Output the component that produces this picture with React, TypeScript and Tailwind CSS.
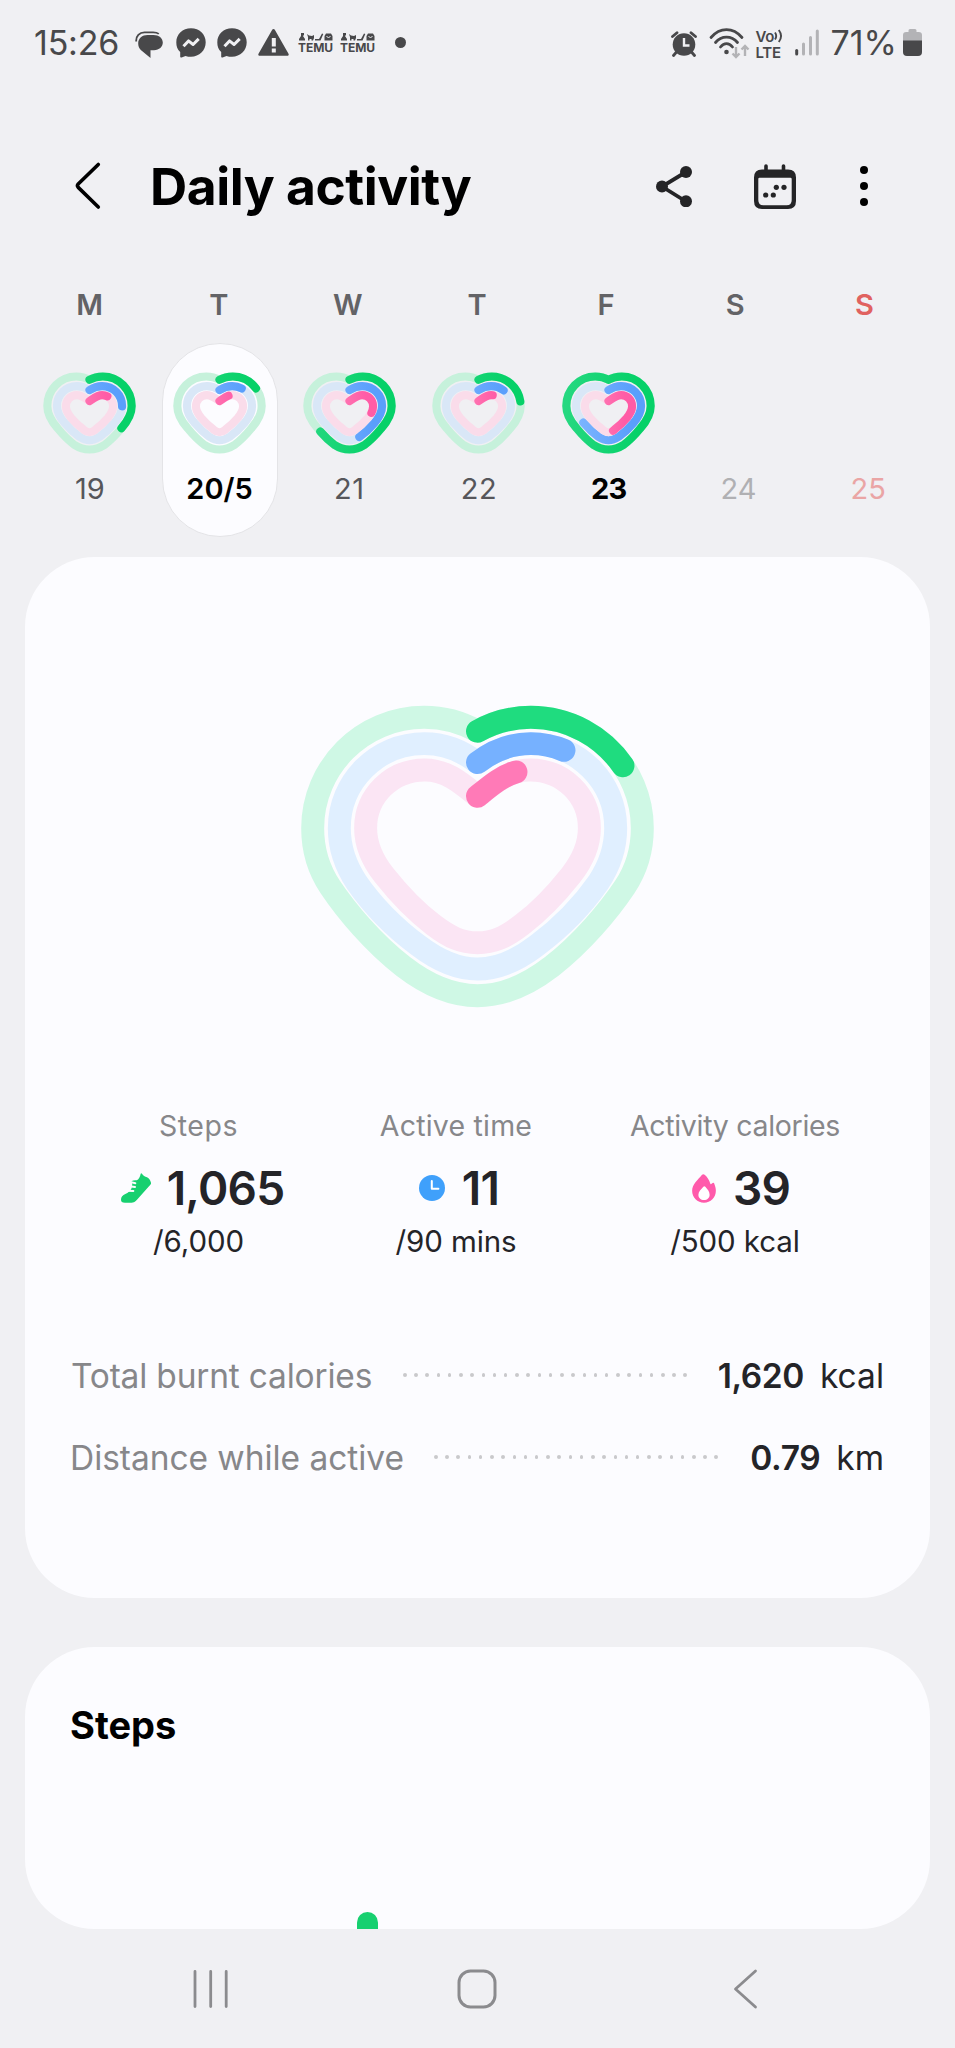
type Progress = { steps: number; time: number; calories: number };

type Day = {
  date: string;
  dateClass: string;
  progress?: Progress;
  selected?: boolean;
};

const weekdays = ["M", "T", "W", "T", "F", "S", "S"];

const days: Day[] = [
  {
    date: "19",
    dateClass: "text-[#56565a]",
    progress: { steps: 34, time: 23.7, calories: 14.3 },
  },
  {
    date: "20/5",
    dateClass: "font-semibold text-black",
    progress: { steps: 16.4, time: 12.3, calories: 7.7 },
    selected: true,
  },
  {
    date: "21",
    dateClass: "text-[#56565a] tracking-[0.500px]",
    progress: { steps: 64.3, time: 44.4, calories: 28 },
  },
  {
    date: "22",
    dateClass: "text-[#56565a] tracking-[0.500px]",
    progress: { steps: 22.1, time: 14.1, calories: 11.5 },
  },
  {
    date: "23",
    dateClass: "font-bold text-black tracking-[-0.800px]",
    progress: { steps: 100, time: 66.5, calories: 46.2 },
  },
  { date: "24", dateClass: "text-[#b0b0b3]" },
  { date: "25", dateClass: "text-[#eaa5a5]" },
];

const smallRings = {
  steps:
    "M0 22C12 15 26 12 40 12C88 12 127 52 127 101C127 128 112 150 96 168C78 190 62 206 44 219C29 229 14 232 0 232C-14 232-29 229-44 219C-62 206-78 190-96 168C-112 150-127 128-127 101C-127 52-88 12-40 12C-26 12-12 15 0 22",
  time: "M0 53C12 45 25 41 38 41C72 41 98 68 98 101C98 122 88 137 75 152C58 172 44 184 30 194C19 201 10 204 0 204C-10 204-19 201-30 194C-44 184-58 172-75 152C-88 137-98 122-98 101C-98 68-72 41-38 41C-25 41-12 45 0 53",
  calories:
    "M0 86C12 78 24 68 38 68C57 68 71 83 71 102C71 116 64 126 56 136C44 150 30 163 18 172C11 178 6 180 0 180C-6 180-11 178-18 172C-30 163-44 150-56 136C-64 126-71 116-71 102C-71 83-57 68-38 68C-24 68-12 78 0 86",
};

function SmallHeart({ progress, day }: { progress: Progress; day: string }) {
  const rings = [
    { d: smallRings.steps, value: progress.steps, track: "#c6f1db", id: "steps", from: "#25d880", to: "#06d168", x: 127 },
    { d: smallRings.time, value: progress.time, track: "#d9e7f7", id: "time", from: "#7db5ff", to: "#5a9ffc", x: 98 },
    { d: smallRings.calories, value: progress.calories, track: "#fadcea", id: "cal", from: "#ff85bb", to: "#ff5ca6", x: 71 },
  ];
  return (
    <svg
      viewBox="-140 -1 280 246"
      className="h-[82px] w-[93px]"
      fill="none"
      strokeWidth="24.5"
    >
      {rings.map((ring) => (
        <g key={ring.id}>
          <linearGradient
            id={`${ring.id}-${day}`}
            gradientUnits="userSpaceOnUse"
            x1={-ring.x}
            y1="0"
            x2={ring.x}
            y2="0"
          >
            <stop stopColor={ring.from} />
            <stop offset="0.85" stopColor={ring.to} />
          </linearGradient>
          <path d={ring.d} stroke={ring.track} />
          <path
            d={ring.d}
            pathLength={100}
            stroke={`url(#${ring.id}-${day})`}
            strokeLinecap="round"
            strokeDasharray={`${ring.value} 200`}
          />
        </g>
      ))}
    </svg>
  );
}

function BigHeart() {
  const rings = [
    {
      d: "M592 154C640 127 695 112 752 112C938 112 1087 262 1087 445C1087 510 1070 568 1034 622C985 695 905 790 815 860C740 918 670 948 592 948C514 948 444 918 369 860C279 790 199 695 150 622C114 568 97 510 97 445C97 262 246 112 432 112C489 112 544 127 592 154",
      value: 17,
      track: "#cff8e5",
      color: "#1fdc7f",
    },
    {
      d: "M592 248C640 211 695 191 752 191C893 191 1007 305 1007 445C1007 500 990 555 955 608C905 680 840 745 770 797C710 843 655 868 592 868C529 868 474 843 414 797C344 745 279 680 229 608C194 555 177 500 177 445C177 305 291 191 432 191C489 191 544 211 592 248",
      value: 11.4,
      track: "#e0efff",
      color: "#76b1ff",
    },
    {
      d: "M592 349C640 310 685 270 750 270C850 270 928 348 928 445C928 500 905 545 872 587C830 640 785 690 725 735C675 773 640 789 592 789C544 789 509 773 459 735C399 690 354 640 312 587C279 545 256 500 256 445C256 348 334 270 434 270C499 270 544 310 592 349",
      value: 7.1,
      track: "#fbe5f4",
      color: "#ff7ab7",
    },
  ];
  return (
    <svg
      viewBox="45 60 1094 940"
      className="h-[313px] w-[365px]"
      fill="none"
      strokeWidth="69"
    >
      {rings.map((ring) => (
        <g key={ring.color}>
          <path d={ring.d} stroke={ring.track} />
          <path
            d={ring.d}
            pathLength={100}
            stroke={ring.color}
            strokeLinecap="round"
            strokeDasharray={`${ring.value} 200`}
          />
        </g>
      ))}
    </svg>
  );
}

function MessengerIcon() {
  return (
    <svg viewBox="0 0 30 30" className="h-[30px] w-[30px]">
      <path
        fill="#48484a"
        d="M15 .3C6.600.3.300 6.400.300 14.200c0 4.100 1.100 7.200 3.900 9.700v4.600c0 .9.700 1.300 1.400 1l3.900-1.600c1.700.6 3.600.9 5.500.9 8.400 0 14.700-6.400 14.700-14.500S23.400.3 15 .3z"
      />
      <path
        d="M7.500 18.300l5-5.400 4.600 3.600 5.600-5.600"
        fill="none"
        stroke="#f0f0f3"
        strokeWidth="3"
        strokeLinejoin="round"
      />
    </svg>
  );
}

function TemuIcon() {
  return (
    <div className="flex w-[35px] flex-col items-center">
      <svg viewBox="0 0 35 8" className="h-2 w-[35px]" fill="#48484a">
        <path d="M3 0h3v2l-1 1 2 3v1.500H1V6l2-3zM9 1l2 1.500 3 .5 2-1v3l-1 2.500h-1.500V6h-2v1.500H10V4zM17 6h4l3-5.500 1.300.6L22.500 7.500H17zM28 .5h5L34.500 3v4.500h-8V3z" />
        <path d="M28.500 3.500q2 2 4 0" stroke="#f0f0f3" fill="none" />
      </svg>
      <span className="mt-px text-[12px] leading-[11px] font-bold tracking-[-0.1px]">
        TEMU
      </span>
    </div>
  );
}

function StatusBar() {
  return (
    <div className="flex h-[85px] items-center justify-between pr-[33px] pl-[34px] text-[#48484a]">
      <div className="flex items-center">
        <span className="w-[101px] text-[34px] tracking-[-0.2px]">15:26</span>
        <svg viewBox="0 0 28 28" className="mt-1 h-7 w-7" fill="#48484a">
          <path d="M12.500 4h6c5.400 0 9.300 3 9.300 7.600 0 4.400-3.500 7.400-8.800 7.600H15.500v7.800L5.800 19C4 17.200 3.200 14.800 3.200 12.200 3.200 7.500 7.300 4 12.500 4z" />
          <path
            d="M1.200 10.500C.8 5 4.500 1.300 9.500 1.300h8.700c2.300 0 4.200.5 5.600 1.600"
            fill="none"
            stroke="#48484a"
            strokeWidth="1.800"
          />
        </svg>
        <div className="ml-[13px] flex gap-[11px]">
          <MessengerIcon />
          <MessengerIcon />
        </div>
        <svg viewBox="0 0 31 27" className="ml-[11px] h-[27px] w-[31px]">
          <path
            fill="#48484a"
            d="M14.200.8a1.500 1.500 0 0 1 2.600 0l13.700 24c.6 1-.1 2-1.200 2H1.700c-1.100 0-1.800-1-1.200-2z"
          />
          <path d="M13.800 9h4v8.500h-4zM13.800 19.600h4v3.800h-4z" fill="#f0f0f3" />
        </svg>
        <div className="ml-[9px] flex gap-[7px]">
          <TemuIcon />
          <TemuIcon />
        </div>
        <div className="ml-5 h-[11px] w-[11px] rounded-full bg-[#48484a]" />
      </div>

      <div className="flex items-center">
        <svg viewBox="0 0 26 26" className="mt-0.5 h-[26px] w-[26px]">
          <g stroke="#48484a" strokeWidth="2.800" strokeLinecap="round">
            <path d="M1.500 5.500L6 1.700M24.500 5.500L20 1.700M5.500 21l-3 3.500M20.500 21l3 3.500" />
          </g>
          <circle cx="13" cy="13.500" r="11.300" fill="#48484a" />
          <path d="M13 7v7.500h5.500" fill="none" stroke="#f0f0f3" strokeWidth="2.400" />
        </svg>
        <svg viewBox="0 0 41 31" className="mt-0.5 ml-[12px] h-[31px] w-[41px]" fill="none">
          <g stroke="#48484a" strokeWidth="2.800" strokeLinecap="round">
            <path d="M2 9.500C11-1 24-1 33 9.500M6.500 14.500c6-7.300 16-7.300 22 0M11.500 19c3.500-4.500 8.500-4.500 12 0" />
          </g>
          <circle cx="17.500" cy="24" r="2.300" fill="#48484a" />
          <path
            d="M27 19v9.500M23.500 25.500L27 29l3.500-3.500M36 28V18.500M32.500 21.500L36 18l3.500 3.500"
            stroke="#b3b3b6"
            strokeWidth="2.400"
          />
        </svg>
        <div className="mt-[3px] ml-[6px] flex w-[28px] flex-col gap-px font-semibold">
          <span className="flex items-center text-[15px] leading-[15px] tracking-[-0.3px]">
            Vo
            <svg viewBox="0 0 9 14" className="h-[14px] w-[9px]" fill="none" stroke="#48484a" strokeWidth="1.900">
              <path d="M1 3.500q2.400 3.300 0 7M4.800 1q4.500 6 0 12" />
            </svg>
          </span>
          <span className="text-[15px] leading-[15px] tracking-[-0.3px]">LTE</span>
        </div>
        <svg viewBox="0 0 25 27" className="ml-[11px] h-[27px] w-[25px]" strokeWidth="3" strokeLinecap="round">
          <path d="M1.700 21.500v3.500" stroke="#48484a" />
          <path d="M8.500 15v10M15.500 8.500V25M22.300 2v23" stroke="#b3b3b6" />
        </svg>
        <span className="ml-[11px] text-[34px]">71%</span>
        <svg viewBox="0 0 19 27" className="ml-1.5 h-[27px] w-[19px]">
          <path
            d="M5.500 1.500Q5.500 0 7 0h5q1.500 0 1.500 1.500V3h2.200Q19 3 19 6v6H0V6Q0 3 3.300 3h2.200z"
            fill="#b3b3b6"
          />
          <path d="M0 11.500h19V23q0 4-4 4H4q-4 0-4-4z" fill="#48484a" />
        </svg>
      </div>
    </div>
  );
}

function Header() {
  return (
    <div className="flex h-[202px] items-center pr-[87px] pl-[74px]">
      <svg
        viewBox="0 0 28 50"
        className="h-[50px] w-7"
        fill="none"
        stroke="#000"
        strokeWidth="3.600"
        strokeLinecap="round"
        strokeLinejoin="round"
      >
        <path d="M24.300 3.500L4.200 23q-1.500 1.700 0 3.400L24.300 46" />
      </svg>
      <h1 className="mt-0.5 ml-[48px] text-[51.500px] font-bold tracking-[-0.450px] text-black">
        Daily activity
      </h1>
      <div className="ml-auto flex items-center">
        <svg viewBox="0 0 36 41" className="h-[41px] w-9" fill="#242426">
          <path d="M30 6L6 20.500 30 35.500" fill="none" stroke="#242426" strokeWidth="3.800" />
          <circle cx="6" cy="20.500" r="6" />
          <circle cx="30" cy="6" r="6" />
          <circle cx="30" cy="35.300" r="6" />
        </svg>
        <svg viewBox="0 0 42 45" className="ml-[62px] h-[45px] w-[42px]" fill="#242426">
          <path d="M12 2v7M29.500 2v7" stroke="#242426" strokeWidth="3.600" strokeLinecap="round" />
          <path
            fillRule="evenodd"
            d="M8 5.500h26q8 0 8 8V37q0 8-8 8H8q-8 0-8-8V13.500q0-8 8-8zM4.300 15v21q0 5.300 5 5.300h23.400q5 0 5-5.300V15q0-1.200-1.200-1.200h-31q-1.200 0-1.200 1.200z"
          />
          <circle cx="22.300" cy="23.300" r="2.600" />
          <circle cx="30" cy="23.300" r="2.600" />
          <circle cx="11.700" cy="31" r="2.600" />
          <circle cx="19.300" cy="31" r="2.600" />
        </svg>
        <div className="ml-16 flex flex-col gap-[8px]">
          <div className="h-2 w-2 rounded-full bg-black" />
          <div className="h-2 w-2 rounded-full bg-black" />
          <div className="h-2 w-2 rounded-full bg-black" />
        </div>
      </div>
    </div>
  );
}

function Week() {
  return (
    <>
      <div className="ml-[25px] grid h-9 w-[904px] grid-cols-7 text-center text-[29px] leading-9 font-semibold text-[#636366]">
        {weekdays.map((name, i) => (
          <span key={i} className={i === 6 ? "text-[#e0625f]" : ""}>
            {name}
          </span>
        ))}
      </div>
      <div className="mt-5 ml-[25px] grid w-[908px] grid-cols-7 justify-items-center">
        {days.map((day) => (
          <div
            key={day.date}
            className={`flex h-[194px] w-[116px] flex-col items-center rounded-full border pt-7 ${
              day.selected ? "border-[#e4e4e7] bg-[#fcfcff]" : "border-transparent"
            }`}
          >
            <div className="h-[82px]">
              {day.progress && <SmallHeart progress={day.progress} day={day.date.slice(0, 2)} />}
            </div>
            <span className={`mt-[17px] text-[29px] leading-9 ${day.dateClass}`}>
              {day.date}
            </span>
          </div>
        ))}
      </div>
    </>
  );
}

function ShoeIcon() {
  return (
    <svg viewBox="0 0 90 90" className="h-[30px] w-[30px]">
      <path
        fill="#17d070"
        d="M59 2q2-3 4 0c3 5 9 9 15 11 7 4 10 9 12 16q1 3-2 6L48 80c-5 6-10 9-17 9H12C3 89 0 85 0 80c0-8 5-13 13-17 9-4 14-9 18-16 3-7 4-14 0-22q8-5 16-3 9-4 12-20z"
      />
      <path
        d="M28 27l15 4M25 40l17 2M20 53l17 1"
        stroke="#fcfcff"
        strokeWidth="6"
        strokeLinecap="round"
      />
    </svg>
  );
}

function ClockIcon() {
  return (
    <svg viewBox="0 0 26 26" className="h-[26px] w-[26px]">
      <circle cx="13" cy="13" r="13" fill="#3fa0fb" />
      <path
        d="M12.800 6v7.800h6.600"
        fill="none"
        stroke="#fff"
        strokeWidth="2"
        strokeLinecap="round"
        strokeLinejoin="round"
      />
    </svg>
  );
}

function FlameIcon() {
  return (
    <svg viewBox="0 0 72 88" className="h-[29px] w-6">
      <path
        fill="#ff5aab"
        d="M30 2q4-3 8 0c8 7 14 16 17 27q1 3 3 1l4-3q4-2 5 2c3 8 5 15 5 22 0 21-16 36-36 36S0 72 0 51C0 31 17 18 30 2z"
      />
      <path
        fill="#fff"
        d="M34 39q3-3 6 0c7 8 13 15 13 24 0 10-7 16-17 16s-17-6-17-16c0-9 8-16 15-24z"
      />
    </svg>
  );
}

const stats = [
  {
    label: "Steps",
    icon: <ShoeIcon />,
    value: "1,065",
    goal: "/6,000",
    labelClass: "tracking-[0.500px]",
    valueClass: "gap-[16px] pl-2",
  },
  {
    label: "Active time",
    icon: <ClockIcon />,
    value: "11",
    goal: "/90 mins",
    labelClass: "tracking-[0.200px]",
    valueClass: "gap-[17px] pl-1.5",
  },
  {
    label: "Activity calories",
    icon: <FlameIcon />,
    value: "39",
    goal: "/500 kcal",
    labelClass: "tracking-[-0.300px]",
    valueClass: "gap-[17px] pl-3",
  },
];

const totals = [
  {
    label: "Total burnt calories",
    value: "1,620",
    unit: "kcal",
    labelClass: "w-[333px] pl-px tracking-[-0.200px]",
  },
  {
    label: "Distance while active",
    value: "0.79",
    unit: "km",
    labelClass: "w-[364px] tracking-[-0.050px]",
  },
];

function ActivityCard() {
  return (
    <section className="mt-5 ml-[25px] h-[1041px] w-[905px] rounded-[70px] bg-[#fcfcff] pt-[143px]">
      <div className="flex justify-center">
        <BigHeart />
      </div>
      <div className="mt-[95px] ml-[45px] grid grid-cols-[257px_258px_300px]">
        {stats.map((stat) => (
          <div key={stat.label} className="flex flex-col items-center whitespace-nowrap">
            <span className={`text-[28.500px] leading-9 text-[#87878a] ${stat.labelClass}`}>
              {stat.label}
            </span>
            <div className={`mt-[18px] flex h-[52px] items-center ${stat.valueClass}`}>
              {stat.icon}
              <span className="text-[46px] font-semibold tracking-[-0.800px] text-[#242428]">
                {stat.value}
              </span>
            </div>
            <span className="mt-[9px] text-[29.500px] leading-9 tracking-[-0.100px] text-[#242428]">
              {stat.goal}
            </span>
          </div>
        ))}
      </div>
      <div className="mt-[97px] flex flex-col gap-[41px] pr-[46px] pl-[45px] text-[33.500px] leading-[41px]">
        {totals.map((row) => (
          <div key={row.label} className="flex items-center whitespace-nowrap">
            <span className={`text-[#87878a] ${row.labelClass}`}>{row.label}</span>
            <div className="mt-[-3px] flex w-[284px] justify-between">
              {Array.from({ length: 26 }, (_, i) => (
                <div key={i} className="h-[3.500px] w-[3.500px] rounded-full bg-[#c9c9cc]" />
              ))}
            </div>
            <span className="ml-auto font-semibold tracking-[-0.400px] text-[#242428]">
              {row.value}
            </span>
            <span className="ml-[16px] text-[#242428]">{row.unit}</span>
          </div>
        ))}
      </div>
    </section>
  );
}

function NavBar() {
  return (
    <div className="grid h-[119px] grid-cols-3 items-center pr-[75px] pl-[75px] text-[#8b8b8e]">
      <svg viewBox="0 0 37 40" className="ml-[117px] h-10 w-[37px]" stroke="currentColor" strokeWidth="2.800" strokeLinecap="round">
        <path d="M3 2.500v35M18.700 2.500v35M34.200 2.500v35" />
      </svg>
      <svg viewBox="0 0 40 40" className="h-10 w-10 justify-self-center" fill="none" stroke="currentColor" strokeWidth="3">
        <rect x="2" y="2" width="36" height="36" rx="11.500" />
      </svg>
      <svg viewBox="0 0 26 40" className="mr-[121px] h-10 w-[26px] justify-self-end" fill="none" stroke="currentColor" strokeWidth="2.800" strokeLinecap="round" strokeLinejoin="round">
        <path d="M22.500 2L2.500 20l20 18" />
      </svg>
    </div>
  );
}

export default function App() {
  return (
    <div className="h-[2048px] w-[955px] overflow-hidden bg-[#f0f0f3] font-['Inter',sans-serif]">
      <StatusBar />
      <Header />
      <Week />
      <ActivityCard />
      <section className="relative mt-[49px] ml-[25px] h-[282px] w-[905px] rounded-[70px] bg-[#fcfcff] pt-[55px] pl-[45px]">
        <h2 className="text-[38px] leading-[46px] font-bold text-black">Steps</h2>
        <div className="absolute bottom-0 left-[332px] h-[17px] w-[21px] rounded-t-full bg-[#17d070]" />
      </section>
      <NavBar />
    </div>
  );
}
